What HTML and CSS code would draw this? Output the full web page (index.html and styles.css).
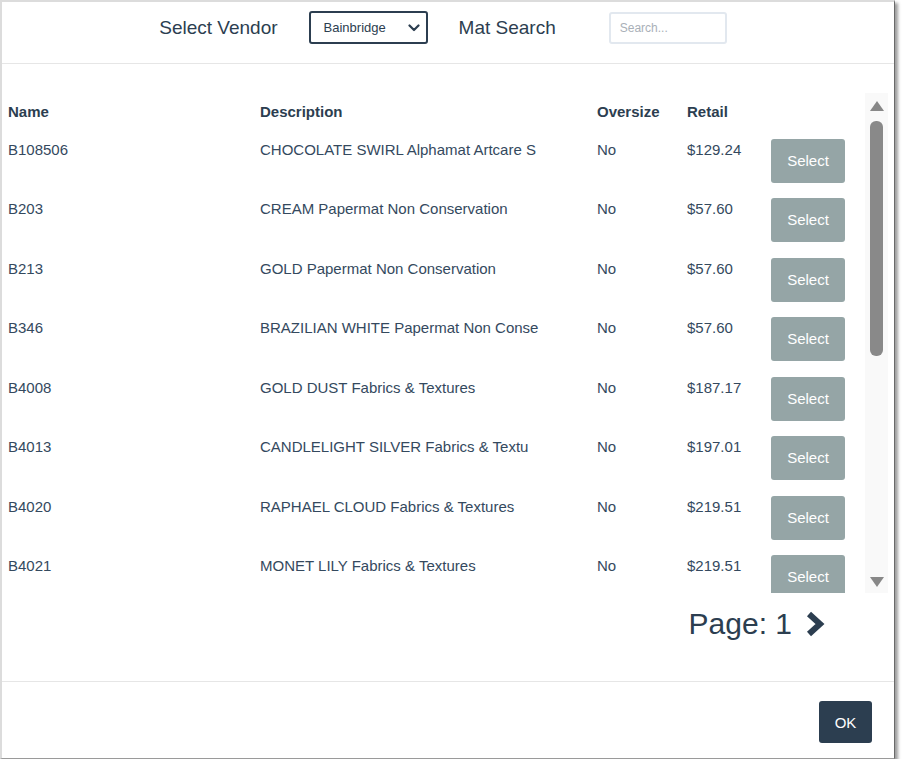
FILE: index.html
```html
<!DOCTYPE html>
<html>
<head>
<meta charset="utf-8">
<link rel="stylesheet" href="styles.css">
</head>
<body>
<div class="modal">
  <div class="header">
    <span class="label label-vendor">Select Vendor</span>
    <div class="select">
      <span>Bainbridge</span>
      <svg class="caret" width="12" height="8" viewBox="0 0 12 8"><path d="M1.5 1.5 L6 6 L10.5 1.5" fill="none" stroke="#2c3e50" stroke-width="2.2" stroke-linecap="round" stroke-linejoin="round"/></svg>
    </div>
    <span class="label label-search">Mat Search</span>
    <div class="search">Search...</div>
  </div>
  <div class="body">
    <div class="scroll">
      <div class="table">
        <div class="row head">
          <div>Name</div><div>Description</div><div>Oversize</div><div>Retail</div><div></div>
        </div>
        <div class="row"><div>B108506</div><div>CHOCOLATE SWIRL Alphamat Artcare S</div><div>No</div><div>$129.24</div><div><span class="btn">Select</span></div></div>
        <div class="row"><div>B203</div><div>CREAM Papermat Non Conservation</div><div>No</div><div>$57.60</div><div><span class="btn">Select</span></div></div>
        <div class="row"><div>B213</div><div>GOLD Papermat Non Conservation</div><div>No</div><div>$57.60</div><div><span class="btn">Select</span></div></div>
        <div class="row"><div>B346</div><div>BRAZILIAN WHITE Papermat Non Conse</div><div>No</div><div>$57.60</div><div><span class="btn">Select</span></div></div>
        <div class="row"><div>B4008</div><div>GOLD DUST Fabrics &amp; Textures</div><div>No</div><div>$187.17</div><div><span class="btn">Select</span></div></div>
        <div class="row"><div>B4013</div><div>CANDLELIGHT SILVER Fabrics &amp; Textu</div><div>No</div><div>$197.01</div><div><span class="btn">Select</span></div></div>
        <div class="row"><div>B4020</div><div>RAPHAEL CLOUD Fabrics &amp; Textures</div><div>No</div><div>$219.51</div><div><span class="btn">Select</span></div></div>
        <div class="row"><div>B4021</div><div>MONET LILY Fabrics &amp; Textures</div><div>No</div><div>$219.51</div><div><span class="btn">Select</span></div></div>
      </div>
      <div class="scrollbar">
        <div class="arrow up"></div>
        <div class="thumb"></div>
        <div class="spacer"></div>
        <div class="arrow down"></div>
      </div>
    </div>
    <div class="pager">
      <span class="page-text">Page: 1</span>
      <svg class="next" width="20" height="26" viewBox="0 0 20 26"><path d="M4 3 L15 13 L4 23" fill="none" stroke="#2c3e50" stroke-width="6" stroke-linejoin="miter"/></svg>
    </div>
  </div>
  <div class="footer">
    <span class="ok">OK</span>
  </div>
</div>
</body>
</html>
```
FILE: styles.css
```css
html, body {
  margin: 0;
  padding: 0;
  background: #ffffff;
}
body {
  font-family: "Liberation Sans", Arial, sans-serif;
  color: #2c3e50;
}
.modal {
  box-sizing: border-box;
  width: 895px;
  height: 759px;
  border-left: 2px solid #dcdcdc;
  border-top: 2px solid #dcdcdc;
  border-right: 1px solid #6a6a6a;
  border-bottom: 1px solid #9a9a9a;
  box-shadow: 3px 3px 3px rgba(0,0,0,0.38);
  background: #fff;
  display: flex;
  flex-direction: column;
}
.header {
  height: 62px;
  box-sizing: border-box;
  padding: 9px 10px 0 0;
  border-bottom: 1px solid #e6e6e6;
  display: flex;
  align-items: flex-start;
  justify-content: center;
}
.label {
  font-size: 19px;
  line-height: 33px;
  color: #2c3e50;
}
.label-vendor { margin-right: 31px; }
.label-search { margin-right: 53px; }
.select {
  box-sizing: border-box;
  width: 119px;
  height: 33px;
  border: 2px solid #2c3e50;
  border-radius: 3px;
  margin-right: 31px;
  display: flex;
  align-items: center;
  justify-content: space-between;
  padding: 0 6px 0 13px;
  font-size: 13px;
  color: #2c3e50;
}
.caret { display: block; }
.search {
  box-sizing: border-box;
  width: 118px;
  height: 32px;
  margin-top: 1px;
  border: 2px solid #e2e8ef;
  border-radius: 3px;
  padding-left: 9px;
  font-size: 12px;
  line-height: 28px;
  color: #a9b0b8;
}
.body {
  padding-top: 29px;
  flex: 1;
  border-bottom: 1px solid #e6e6e6;
}
.scroll {
  height: 500px;
  display: flex;
}
.table {
  flex: 1;
  overflow: hidden;
  padding-left: 6px;
}
.row {
  display: grid;
  grid-template-columns: 252px 337px 90px 84px 74px;
  height: 59.43px;
  font-size: 15px;
  line-height: 16px;
  color: #34495e;
}
.row > div { padding-top: 7px; }
.row > div:last-child { padding-top: 4px; }
.row.head {
  height: 42px;
  font-weight: bold;
  color: #2c3e50;
}
.row.head > div { padding-top: 11px; }
.btn {
  display: flex;
  align-items: center;
  justify-content: center;
  width: 74px;
  height: 44px;
  background: #95a5a6;
  border-radius: 3px;
  color: #fff;
  font-size: 15px;
}
.scrollbar {
  width: 23px;
  background: #f9f9f9;
  display: flex;
  flex-direction: column;
  align-items: center;
  margin-right: 6px;
}
.arrow {
  width: 0;
  height: 0;
  border-left: 7px solid transparent;
  border-right: 7px solid transparent;
}
.arrow.up {
  margin-top: 8px;
  border-bottom: 10px solid #888;
}
.arrow.down {
  margin-bottom: 6px;
  border-top: 10px solid #888;
}
.thumb {
  margin-top: 10px;
  width: 13px;
  height: 235px;
  border-radius: 6px;
  background: #898989;
}
.spacer { flex: 1; }
.pager {
  margin-top: 15px;
  display: flex;
  align-items: center;
  justify-content: flex-end;
  padding-right: 69px;
  height: 32px;
}
.page-text {
  font-size: 30px;
  line-height: 32px;
  color: #2c3e50;
  margin-right: 13px;
}
.next { display: block; }
.footer {
  height: 76px;
  box-sizing: border-box;
  padding: 19px 22px 0 0;
  display: flex;
  justify-content: flex-end;
  align-items: flex-start;
}
.ok {
  width: 53px;
  height: 42px;
  background: #2c3e50;
  border-radius: 3px;
  color: #fff;
  font-size: 15px;
  display: flex;
  align-items: center;
  justify-content: center;
}
```
